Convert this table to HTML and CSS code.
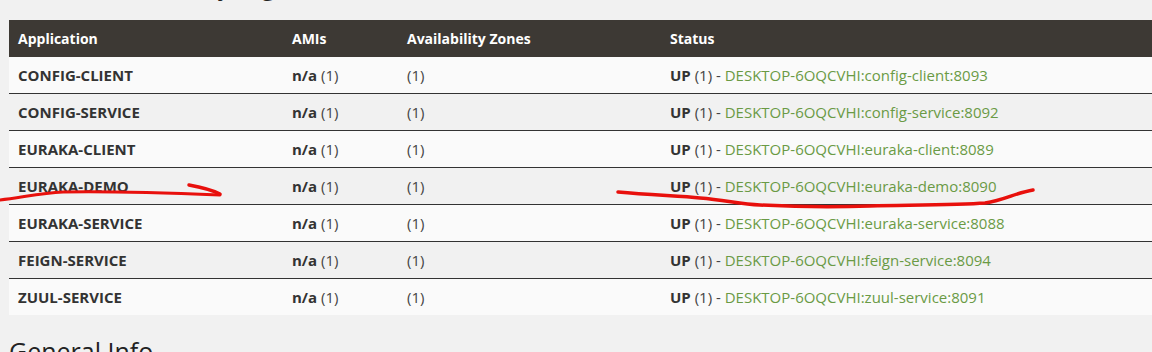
FILE: index.html
```html
<!DOCTYPE html>
<html>
<head>
<meta charset="utf-8">
<link rel="stylesheet" href="styles.css">
</head>
<body>
<div class="page">
  <h2 class="title top-title">Instances currently registered with Eureka</h2>
  <table class="apps">
    <colgroup>
      <col class="c-app"><col class="c-ami"><col class="c-az"><col>
    </colgroup>
    <thead>
      <tr><th>Application</th><th>AMIs</th><th>Availability Zones</th><th>Status</th></tr>
    </thead>
    <tbody>
      <tr><td class="name">CONFIG-CLIENT</td><td><b>n/a</b> (1)</td><td>(1)</td><td><b>UP</b> (1) - <a>DESKTOP-6OQCVHI:config-client:8093</a></td></tr>
      <tr><td class="name">CONFIG-SERVICE</td><td><b>n/a</b> (1)</td><td>(1)</td><td><b>UP</b> (1) - <a>DESKTOP-6OQCVHI:config-service:8092</a></td></tr>
      <tr><td class="name">EURAKA-CLIENT</td><td><b>n/a</b> (1)</td><td>(1)</td><td><b>UP</b> (1) - <a>DESKTOP-6OQCVHI:euraka-client:8089</a></td></tr>
      <tr><td class="name">EURAKA-DEMO</td><td><b>n/a</b> (1)</td><td>(1)</td><td><b>UP</b> (1) - <a>DESKTOP-6OQCVHI:euraka-demo:8090</a></td></tr>
      <tr><td class="name">EURAKA-SERVICE</td><td><b>n/a</b> (1)</td><td>(1)</td><td><b>UP</b> (1) - <a>DESKTOP-6OQCVHI:euraka-service:8088</a></td></tr>
      <tr><td class="name">FEIGN-SERVICE</td><td><b>n/a</b> (1)</td><td>(1)</td><td><b>UP</b> (1) - <a>DESKTOP-6OQCVHI:feign-service:8094</a></td></tr>
      <tr><td class="name">ZUUL-SERVICE</td><td><b>n/a</b> (1)</td><td>(1)</td><td><b>UP</b> (1) - <a>DESKTOP-6OQCVHI:zuul-service:8091</a></td></tr>
    </tbody>
  </table>
  <h2 class="title bottom-title">General Info</h2>
</div>
<svg class="marks" width="1152" height="352" viewBox="0 0 1152 352">
  <path d="M0 200 C 20 198, 40 193, 63 192 C 110 191, 170 193, 220 195" fill="none" stroke="#e8100c" stroke-width="3" stroke-linecap="round"/>
  <path d="M189 185 C 200 187, 212 190, 220 194" fill="none" stroke="#e8100c" stroke-width="3.5" stroke-linecap="round"/>
  <path d="M618 192 C 650 195, 680 196, 700 198 C 725 200, 740 204, 760 205 C 800 207, 840 207, 870 206 C 920 205, 960 205, 985 203 C 1005 200, 1015 193, 1033 190" fill="none" stroke="#e8100c" stroke-width="3.5" stroke-linecap="round"/>
</svg>
</body>
</html>
```
FILE: styles.css
```css
html, body {
  margin: 0;
  padding: 0;
  background: #f1f1f1;
}
body {
  font-family: "Open Sans", "Liberation Sans", sans-serif;
  color: #333;
  width: 1152px;
  height: 352px;
  overflow: hidden;
  position: relative;
}
.page {
  padding-left: 9px;
}
.title {
  margin: 0;
  font-size: 25px;
  font-weight: 400;
  color: #222;
  line-height: 30px;
}
.top-title {
  margin-top: -30px;
  margin-bottom: 20px;
}
.bottom-title {
  margin-top: 21px;
}
.apps {
  width: 1160px;
  border-collapse: collapse;
  font-size: 15px;
}
.c-app { width: 274px; }
.c-ami { width: 115px; }
.c-az { width: 263px; }
.apps th {
  background: #3d3934;
  color: #fff;
  text-align: left;
  font-weight: 700;
  font-size: 14px;
  height: 37px;
  padding: 0 9px;
}
.apps td {
  height: 36px;
  padding: 0 9px;
  background: #fafafa;
  color: #444;
}
.apps tbody tr:nth-child(even) td {
  background: #f1f1f1;
}
.apps tbody tr + tr td {
  border-top: 1px solid #333;
}
.apps td.name,
.apps b {
  font-weight: 700;
  color: #333;
}
.apps a {
  color: #6a9a45;
}
.marks {
  position: absolute;
  left: 0;
  top: 0;
  pointer-events: none;
}
```
